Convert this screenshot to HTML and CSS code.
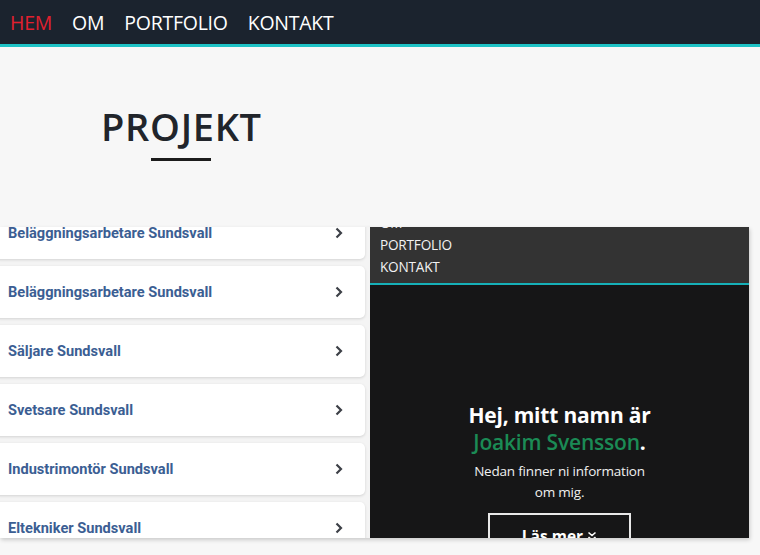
FILE: index.html
```html
<!DOCTYPE html>
<html lang="sv">
<head>
<meta charset="utf-8">
<title>Projekt</title>
<link rel="stylesheet" href="styles.css">
</head>
<body>
<header class="topnav">
  <a class="nav-link active" href="#">HEM</a>
  <a class="nav-link" href="#">OM</a>
  <a class="nav-link" href="#">PORTFOLIO</a>
  <a class="nav-link" href="#">KONTAKT</a>
</header>

<section class="projects">
  <h1 class="projects-title">PROJEKT</h1>
</section>

<div class="shot">
  <div class="shot-list">
    <div class="job-card"><span class="job-title">Beläggningsarbetare Sundsvall</span><svg class="chev" width="8" height="12" viewBox="0 0 8 12"><path d="M1.5 1.5 L6 6 L1.5 10.5" fill="none" stroke="#3d4047" stroke-width="2.2"/></svg></div>
    <div class="job-card"><span class="job-title">Beläggningsarbetare Sundsvall</span><svg class="chev" width="8" height="12" viewBox="0 0 8 12"><path d="M1.5 1.5 L6 6 L1.5 10.5" fill="none" stroke="#3d4047" stroke-width="2.2"/></svg></div>
    <div class="job-card"><span class="job-title">Säljare Sundsvall</span><svg class="chev" width="8" height="12" viewBox="0 0 8 12"><path d="M1.5 1.5 L6 6 L1.5 10.5" fill="none" stroke="#3d4047" stroke-width="2.2"/></svg></div>
    <div class="job-card"><span class="job-title">Svetsare Sundsvall</span><svg class="chev" width="8" height="12" viewBox="0 0 8 12"><path d="M1.5 1.5 L6 6 L1.5 10.5" fill="none" stroke="#3d4047" stroke-width="2.2"/></svg></div>
    <div class="job-card"><span class="job-title">Industrimontör Sundsvall</span><svg class="chev" width="8" height="12" viewBox="0 0 8 12"><path d="M1.5 1.5 L6 6 L1.5 10.5" fill="none" stroke="#3d4047" stroke-width="2.2"/></svg></div>
    <div class="job-card"><span class="job-title">Eltekniker Sundsvall</span><svg class="chev" width="8" height="12" viewBox="0 0 8 12"><path d="M1.5 1.5 L6 6 L1.5 10.5" fill="none" stroke="#3d4047" stroke-width="2.2"/></svg></div>
  </div>
  <div class="shot-site">
    <nav class="mini-nav">
      <span class="mini-link">OM</span>
      <span class="mini-link">PORTFOLIO</span>
      <span class="mini-link">KONTAKT</span>
    </nav>
    <div class="mini-hero">
      <p class="hero-title">Hej, mitt namn är<br><span class="hero-name">Joakim Svensson</span>.</p>
      <p class="hero-sub">Nedan finner ni information<br>om mig.</p>
      <span class="hero-btn">Läs mer <svg class="dbl" width="10" height="11" viewBox="0 0 10 11"><path d="M1.5 1.5 L5 4.5 L8.5 1.5 M1.5 6 L5 9 L8.5 6" fill="none" stroke="#fff" stroke-width="1.6"/></svg></span>
    </div>
  </div>
</div>
</body>
</html>
```

FILE: styles.css
```css
* { box-sizing: border-box; }
html, body { margin: 0; padding: 0; }
body {
  background: #f7f7f7;
  font-family: "Open Sans", "Noto Sans", sans-serif;
  height: 555px;
  overflow: hidden;
}

.topnav {
  height: 47px;
  background: #1b232e;
  border-bottom: 3px solid #1ec3c6;
  display: flex;
  align-items: center;
  padding: 0 0 0 10px;
  gap: 20px;
}
.nav-link {
  color: #ffffff;
  text-decoration: none;
  font-size: 19.5px;
  letter-spacing: -0.25px;
}
.nav-link.active { color: #e2202f; }

.projects {
  padding: 56px 0 0 101px;
  height: 180px;
}
.projects-title {
  display: inline-block;
  position: relative;
  margin: 0;
  font-size: 38px;
  font-weight: 600;
  color: #21252b;
  letter-spacing: 0.7px;
  line-height: 46px;
}
.projects-title::after {
  content: "";
  position: absolute;
  left: 50%;
  margin-left: -30px;
  bottom: -12px;
  width: 60px;
  height: 3px;
  background: #1c1c1c;
}

.shot {
  display: flex;
  width: 749px;
  height: 311px;
  background: #f4f4f4;
  box-shadow: 1px 2px 4px rgba(0,0,0,0.18);
  overflow: hidden;
}
.shot-list {
  width: 370px;
  flex: none;
  display: flex;
  flex-direction: column;
  gap: 7px;
  margin-top: -20px;
}
.job-card {
  flex: none;
  height: 52px;
  width: 371px;
  margin-left: -6px;
  background: #ffffff;
  border-radius: 5px;
  box-shadow: 0 1px 3px rgba(0,0,0,0.14);
  display: flex;
  align-items: center;
  justify-content: space-between;
  padding: 0 22px 0 14px;
}
.job-title {
  font-family: Roboto, "Liberation Sans", sans-serif;
  font-weight: 700;
  font-size: 14.6px;
  color: #3b5e93;
}
.chev { display: block; }

.shot-site {
  flex: 1;
  background: #161617;
  display: flex;
  flex-direction: column;
}
.mini-nav {
  background: #333333;
  border-bottom: 2px solid #16b0b8;
  display: flex;
  flex-direction: column;
  margin-top: -15px;
  padding: 0 0 5px 10px;
}
.mini-link {
  color: #f2f2f2;
  font-size: 13.6px;
  line-height: 22px;
  letter-spacing: -0.2px;
}
.mini-hero {
  display: flex;
  flex-direction: column;
  align-items: center;
  text-align: center;
  padding-top: 117px;
}
.hero-title {
  margin: 0;
  color: #ffffff;
  font-weight: 700;
  font-size: 21px;
  line-height: 27px;
  letter-spacing: -0.2px;
}
.hero-name { color: #1b8b55; font-weight: 600; }
.hero-sub {
  margin: 5px 0 0;
  color: #f0f0f0;
  font-size: 13.5px;
  line-height: 21px;
  letter-spacing: -0.2px;
}
.hero-btn {
  margin-top: 10px;
  width: 143px;
  height: 40px;
  border: 2px solid #e8e8e8;
  color: #ffffff;
  font-weight: 700;
  font-size: 15.5px;
  display: flex;
  justify-content: center;
  align-items: flex-start;
  gap: 4px;
  padding-top: 10px;
}
.dbl { margin-top: 6px; }
```
